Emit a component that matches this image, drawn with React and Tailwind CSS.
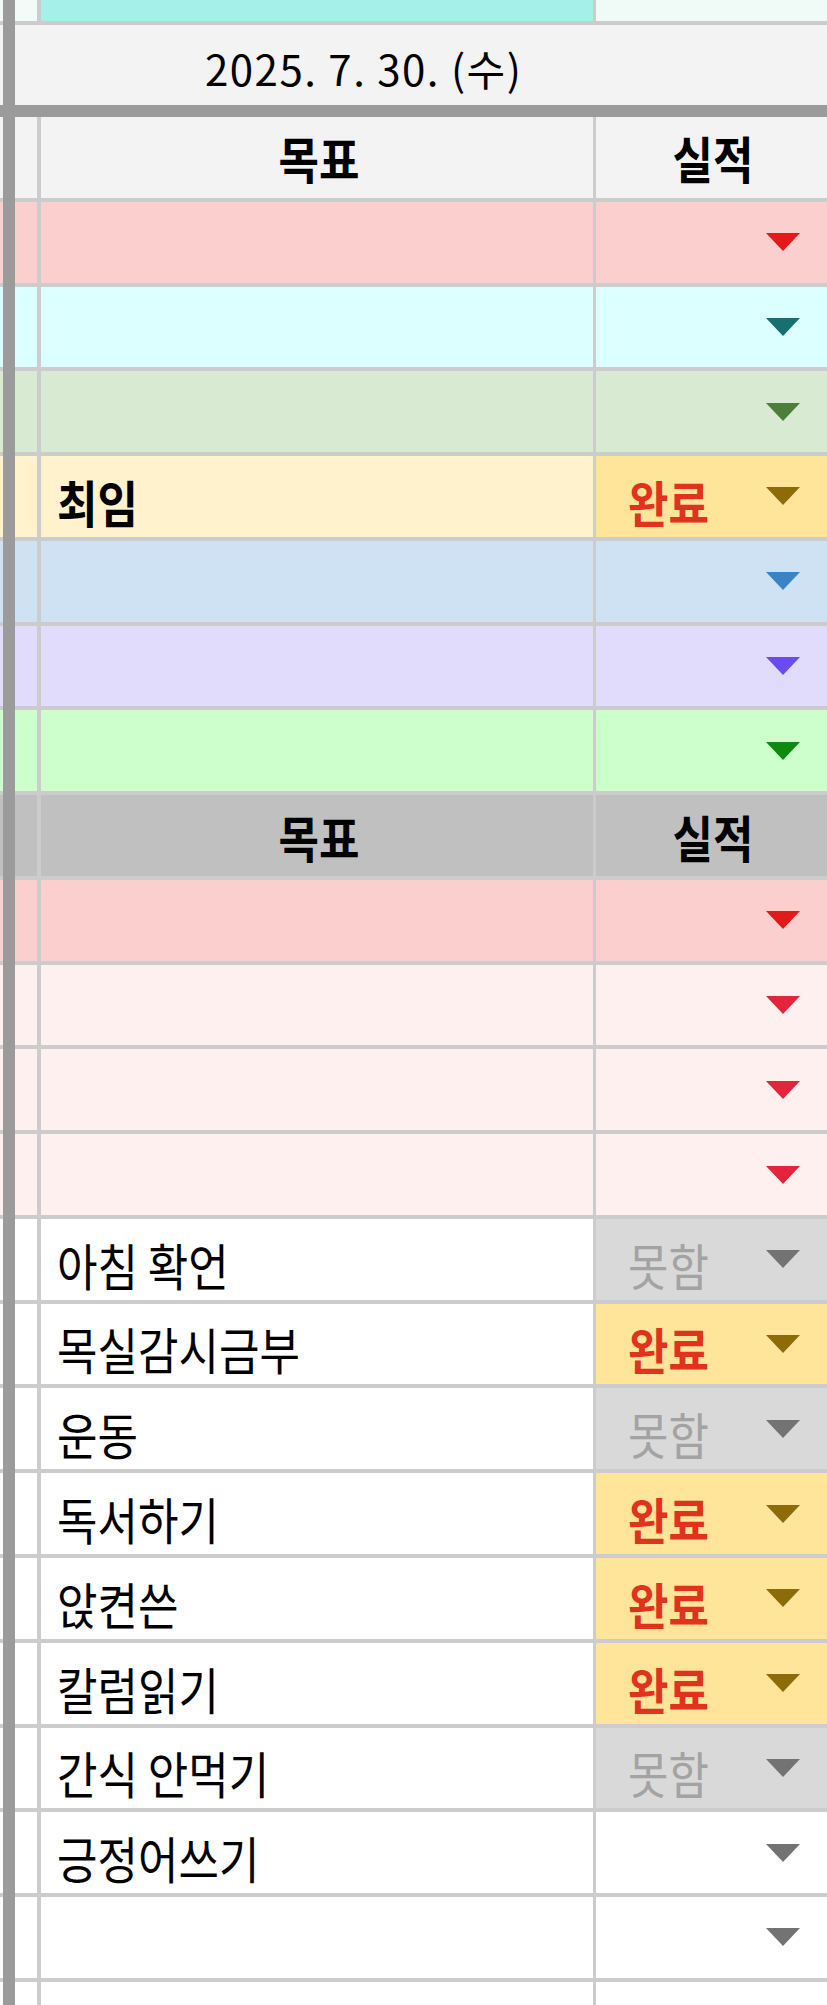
import React from 'react';

const Tri = ({ color }) => (
  <svg width="34" height="18" viewBox="0 0 34 18" className="ml-auto mr-[27px] shrink-0">
    <polygon points="0,0 34,0 17,18" fill={color} />
  </svg>
);

const LABEL = "inline-block origin-left scale-x-[0.88] whitespace-nowrap text-[50px] leading-none";
const HEAD = "inline-block scale-x-[0.88] whitespace-nowrap text-[50px] font-bold leading-none text-black";

function GridRow({ narrow, main, right, label, bold, status, tri, header }) {
  return (
    <div className="flex h-[84.77px] shrink-0">
      <div className="flex w-[3px] flex-col">
        <div className={`flex-1 ${narrow}`} />
        <div className="h-[4px] bg-[#cccccc]" />
      </div>
      <div className="w-[12px] bg-[#9b9b9b]" />
      <div className="flex flex-1 flex-col">
        <div className="flex flex-1">
          <div className={`w-[22px] ${narrow}`} />
          <div className="w-[4px] bg-[#cccccc]" />
          {header ? (
            <div className={`flex w-[552px] items-center justify-center pl-[4px] ${main}`}>
              <span className={HEAD}>목표</span>
            </div>
          ) : (
            <div className={`flex w-[552px] items-end pb-[11px] pl-[16px] ${main}`}>
              {label && (
                <span className={`${LABEL} ${bold ? 'font-bold' : 'font-normal'} text-black`}>{label}</span>
              )}
            </div>
          )}
          <div className="w-[3px] bg-[#cccccc]" />
          {header ? (
            <div className={`flex flex-1 items-center justify-center pl-[3px] ${right}`}>
              <span className={HEAD}>실적</span>
            </div>
          ) : (
            <div className={`flex flex-1 items-center ${right}`}>
              {status === 'done' && (
                <span className={`${LABEL} mb-[11px] ml-[32px] self-end font-bold text-[#e0321c]`}>완료</span>
              )}
              {status === 'fail' && (
                <span className={`${LABEL} mb-[11px] ml-[32px] self-end font-normal text-[#a3a3a3]`}>못함</span>
              )}
              {tri && <Tri color={tri} />}
            </div>
          )}
        </div>
        <div className="h-[4px] bg-[#cccccc]" />
      </div>
    </div>
  );
}

const rows = [
  { header: true, narrow: 'bg-[#f3f3f3]', main: 'bg-[#f3f3f3]', right: 'bg-[#f3f3f3]' },
  { narrow: 'bg-[#fccfcf]', main: 'bg-[#fccfcf]', right: 'bg-[#fccfcf]', tri: '#e21a1a' },
  { narrow: 'bg-[#dcffff]', main: 'bg-[#dcffff]', right: 'bg-[#dcffff]', tri: '#16706f' },
  { narrow: 'bg-[#d9ead3]', main: 'bg-[#d9ead3]', right: 'bg-[#d9ead3]', tri: '#4b7f3a' },
  { narrow: 'bg-[#fff2cc]', main: 'bg-[#fff2cc]', right: 'bg-[#ffe599]', tri: '#8c6b08', label: '최임', bold: true, status: 'done' },
  { narrow: 'bg-[#cfe2f3]', main: 'bg-[#cfe2f3]', right: 'bg-[#cfe2f3]', tri: '#3b84c4' },
  { narrow: 'bg-[#e1dcfc]', main: 'bg-[#e1dcfc]', right: 'bg-[#e1dcfc]', tri: '#6a4bf0' },
  { narrow: 'bg-[#ccffcc]', main: 'bg-[#ccffcc]', right: 'bg-[#ccffcc]', tri: '#0f8a0f' },
  { header: true, narrow: 'bg-[#c0c0c0]', main: 'bg-[#c0c0c0]', right: 'bg-[#c0c0c0]' },
  { narrow: 'bg-[#fccfcf]', main: 'bg-[#fccfcf]', right: 'bg-[#fccfcf]', tri: '#e21a1a' },
  { narrow: 'bg-[#fff0f0]', main: 'bg-[#fff0f0]', right: 'bg-[#fff0f0]', tri: '#e3243a' },
  { narrow: 'bg-[#fff0f0]', main: 'bg-[#fff0f0]', right: 'bg-[#fff0f0]', tri: '#e3243a' },
  { narrow: 'bg-[#fff0f0]', main: 'bg-[#fff0f0]', right: 'bg-[#fff0f0]', tri: '#e3243a' },
  { narrow: 'bg-white', main: 'bg-white', right: 'bg-[#d9d9d9]', tri: '#737373', label: '아침 확언', status: 'fail' },
  { narrow: 'bg-white', main: 'bg-white', right: 'bg-[#ffe599]', tri: '#8c6b08', label: '목실감시금부', status: 'done' },
  { narrow: 'bg-white', main: 'bg-white', right: 'bg-[#d9d9d9]', tri: '#737373', label: '운동', status: 'fail' },
  { narrow: 'bg-white', main: 'bg-white', right: 'bg-[#ffe599]', tri: '#8c6b08', label: '독서하기', status: 'done' },
  { narrow: 'bg-white', main: 'bg-white', right: 'bg-[#ffe599]', tri: '#8c6b08', label: '앉켠쓴', status: 'done' },
  { narrow: 'bg-white', main: 'bg-white', right: 'bg-[#ffe599]', tri: '#8c6b08', label: '칼럼읽기', status: 'done' },
  { narrow: 'bg-white', main: 'bg-white', right: 'bg-[#d9d9d9]', tri: '#737373', label: '간식 안먹기', status: 'fail' },
  { narrow: 'bg-white', main: 'bg-white', right: 'bg-white', tri: '#737373', label: '긍정어쓰기' },
  { narrow: 'bg-white', main: 'bg-white', right: 'bg-white', tri: '#737373' },
  { narrow: 'bg-white', main: 'bg-white', right: 'bg-white', tri: '#737373' },
];

export default function App() {
  return (
    <div className="flex h-[2005px] w-[827px] flex-col overflow-hidden bg-white font-['Noto_Sans_CJK_KR','Noto_Sans',sans-serif]">
      {/* top partial row */}
      <div className="flex h-[25px] shrink-0">
        <div className="flex w-[3px] flex-col">
          <div className="flex-1 bg-[#f3fbf9]" />
          <div className="h-[4px] bg-[#cccccc]" />
        </div>
        <div className="w-[12px] bg-[#9b9b9b]" />
        <div className="flex flex-1 flex-col">
          <div className="flex flex-1">
            <div className="w-[22px] bg-[#f3fbf9]" />
            <div className="w-[4px] bg-[#cccccc]" />
            <div className="w-[552px] bg-[#a5f0e8]" />
            <div className="w-[3px] bg-[#cccccc]" />
            <div className="flex-1 bg-[#f0faf7]" />
          </div>
          <div className="h-[4px] bg-[#cccccc]" />
        </div>
      </div>

      {/* date row */}
      <div className="flex h-[80px] shrink-0">
        <div className="w-[3px] bg-[#f3f3f3]" />
        <div className="w-[12px] bg-[#9b9b9b]" />
        <div className="flex flex-1 items-start bg-[#f3f3f3] pl-[190px] pt-[22px]">
          <span className="whitespace-nowrap text-[42px] font-normal leading-none tracking-[1.5px] text-black">2025. 7. 30. (수)</span>
        </div>
      </div>
      <div className="h-[12px] shrink-0 bg-[#9b9b9b]" />

      {rows.map((r, i) => (
        <GridRow key={i} {...r} />
      ))}
    </div>
  );
}
